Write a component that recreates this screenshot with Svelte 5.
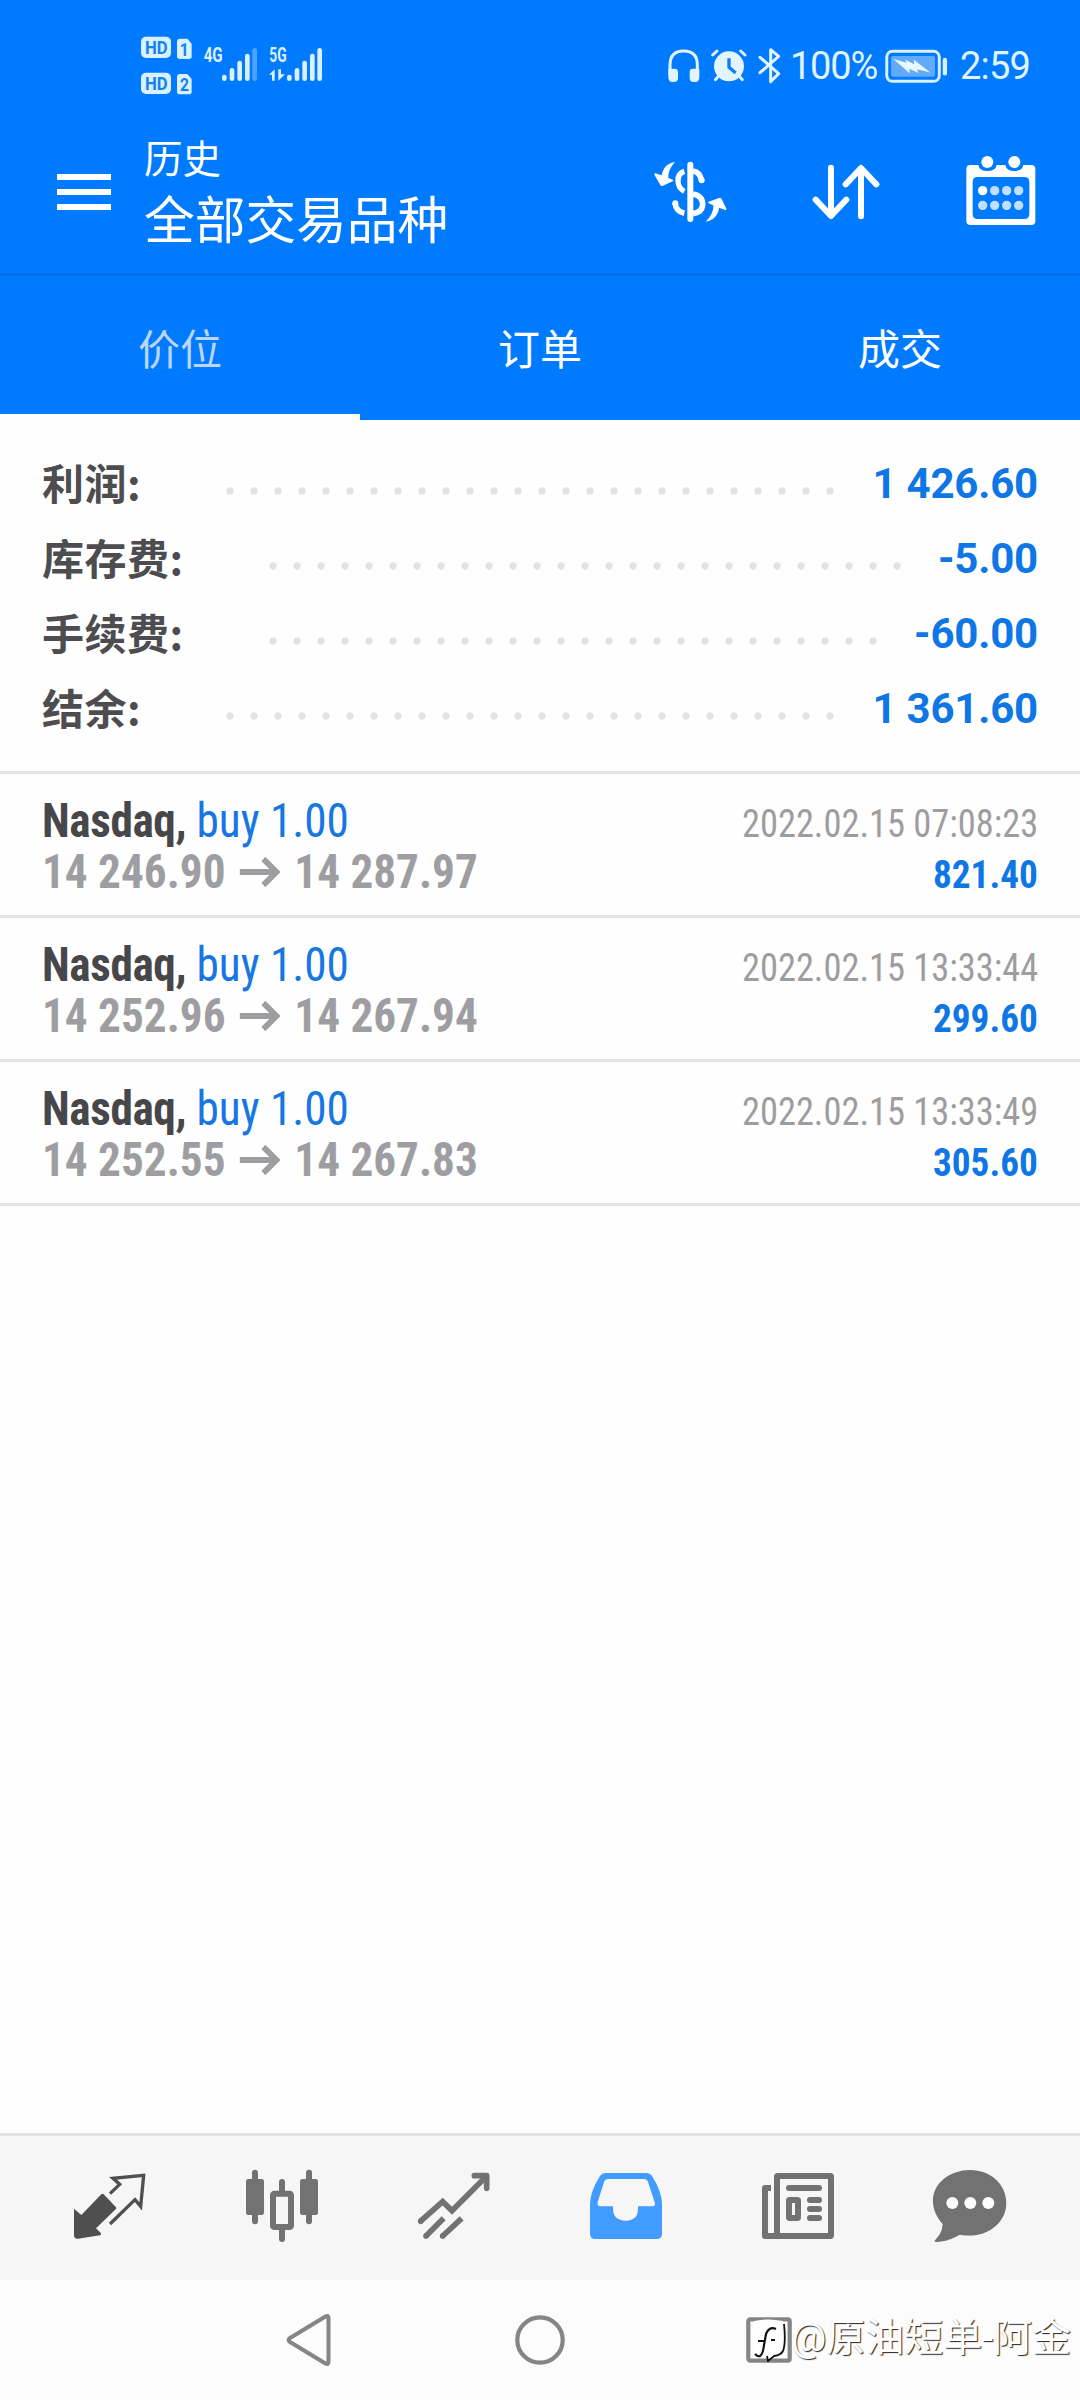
<script lang="ts">
	type Deal = { symbol: string; side: string; open: string; close: string; time: string; profit: string };

	const tabs = ['价位', '订单', '成交'];
	let activeTab = $state(0);

	// dots: number of leader dots between label and value
	const summary = [
		{ label: '利润:', value: '1 426.60', dots: 26 },
		{ label: '库存费:', value: '-5.00', dots: 27 },
		{ label: '手续费:', value: '-60.00', dots: 26 },
		{ label: '结余:', value: '1 361.60', dots: 26 }
	];

	const deals: Deal[] = [
		{ symbol: 'Nasdaq', side: 'buy 1.00', open: '14 246.90', close: '14 287.97', time: '2022.02.15 07:08:23', profit: '821.40' },
		{ symbol: 'Nasdaq', side: 'buy 1.00', open: '14 252.96', close: '14 267.94', time: '2022.02.15 13:33:44', profit: '299.60' },
		{ symbol: 'Nasdaq', side: 'buy 1.00', open: '14 252.55', close: '14 267.83', time: '2022.02.15 13:33:49', profit: '305.60' }
	];
</script>

<div class="screen">
	<header>
		<!-- Status bar -->
		<div class="status">
			<svg class="signals" viewBox="0 0 660 270" aria-hidden="true">
				<g fill="#d9f1ff">
					<rect x="63" y="50" width="90" height="64" rx="15" />
					<rect x="63" y="158" width="90" height="64" rx="15" />
					<path d="M180 56h22l13 15v38q0 8-8 8h-27q-9 0-9-8v-44q0-9 9-9z" />
					<path d="M180 162h22l13 15v38q0 8-8 8h-27q-9 0-9-8v-44q0-9 9-9z" />
				</g>
				<g class="badge-text">
					<text x="75" y="102" textLength="68" lengthAdjust="spacingAndGlyphs">HD</text>
					<text x="75" y="210" textLength="68" lengthAdjust="spacingAndGlyphs">HD</text>
					<text x="179" y="107" textLength="27" lengthAdjust="spacingAndGlyphs">1</text>
					<text x="180" y="213" textLength="27" lengthAdjust="spacingAndGlyphs">2</text>
				</g>
				<g class="net-text">
					<text x="251" y="125" textLength="57" lengthAdjust="spacingAndGlyphs">4G</text>
					<text x="448" y="125" textLength="52" lengthAdjust="spacingAndGlyphs">5G</text>
				</g>
				<g stroke="#d9f1ff" stroke-width="14" stroke-linecap="round" fill="none">
					<path d="M313 171v5M336 151v25M359 129v47M382 108v68" />
					<path d="M404 91v85" opacity=".35" />
					<path d="M508 171v5M531 151v25M554 129v47M577 108v68M599 91v85" />
				</g>
				<path d="M447 164l17-16v34h-8v-18zM475 148h8v15h12l-20 19z" fill="#d9f1ff" />
			</svg>
			<div class="status-right">
				<svg class="st-icons" viewBox="50 48 348 120" aria-hidden="true">
					<path d="M59 135v-30q0-42 41-42t41 42v30" fill="none" stroke="#e2f5ff" stroke-width="9" />
					<path d="M54 116h19q10 0 10 10v18q0 12-12 12h-5q-12 0-12-14zM147 116h-19q-10 0-10 10v18q0 12 12 12h5q12 0 12-14z" fill="#e2f5ff" />
					<circle cx="236" cy="109" r="45" fill="#e2f5ff" />
					<g fill="none" stroke="#e2f5ff" stroke-width="9" stroke-linecap="round">
						<path d="M187 75l13-12M284 75l-13-12M204 139l-9 10M267 139l9 10" />
						<path d="M329 82l56 49-24 24V59l24 20-56 49" stroke-linejoin="round" />
					</g>
					<path d="M236 85v27l20 17" fill="none" stroke="#0a7cf8" stroke-width="10" />
				</svg>
				<span class="percent">100%</span>
				<svg class="battery" viewBox="702 54 196 106" aria-hidden="true">
					<rect x="710" y="61" width="159" height="91" rx="17" fill="none" stroke="#d9f1ff" stroke-width="9" />
					<rect x="723" y="75" width="133" height="63" rx="6" fill="#62abfa" />
					<path d="M730 84l40 12-5-10 28 14-2-14 51 39-41-10 5 12-28-13 2 14z" fill="#e8f8ff" />
					<path d="M886 87v41" stroke="#d9f1ff" stroke-width="13" stroke-linecap="round" />
				</svg>
				<span class="clock">2:59</span>
			</div>
		</div>

		<!-- Toolbar -->
		<div class="toolbar">
			<button class="burger" aria-label="menu"><i></i><i></i><i></i></button>
			<div class="titles">
				<div class="sub">历史</div>
				<h1>全部交易品种</h1>
			</div>
			<div class="actions">
				<svg viewBox="47 21 270 270" aria-hidden="true">
					<g fill="none" stroke="#fff">
						<path d="M180 74v163" stroke-width="18" stroke-linecap="round" />
						<path d="M162 94q-20 6-19 29 1 22 19 31" stroke-width="16" />
						<path d="M188 93q21 3 26 29M134 189q3 25 28 31" stroke-width="17" />
						<path d="M188 162q30 6 29 33-2 22-29 26" stroke-width="17" />
					</g>
					<circle cx="214" cy="121" r="9" fill="#fff" />
					<circle cx="135" cy="190" r="9" fill="#fff" />
					<path d="M134 66q-22 3-33 20-5 9-7 20l-19-6q-4 0-3 4l18 31q3 4 8 2l29-13q4-3 0-5l-13-5q-2-24 20-48z" fill="#fff" />
					<path d="M226 245q24-3 34-22 6-10 6-20l18 7q5 1 4-4l-14-29q-3-5-8-3l-31 11q-4 3 0 5l14 6q2 25-23 49z" fill="#fff" />
				</svg>
				<svg viewBox="513 21 270 270" aria-hidden="true">
					<path d="M603 83v144M557 179l46 49 46-49M693 229V85M647 133l46-49 46 49" fill="none" stroke="#fff" stroke-width="18" stroke-linecap="round" stroke-linejoin="round" />
				</svg>
				<svg viewBox="977 21 270 270" aria-hidden="true">
					<path d="M1020 75h24q3 18 27 18 25 0 28-18h26q3 18 27 18 25 0 27-18h24q12 0 12 12v156q0 12-12 12h-183q-12 0-12-12V87q0-12 12-12zm22 36q-15 0-15 15v96q0 15 15 15h140q15 0 15-15v-96q0-15-15-15z" fill="#fff" fill-rule="evenodd" />
					<circle cx="1071" cy="66" r="18" fill="#fff" />
					<circle cx="1152" cy="66" r="18" fill="#fff" />
					<circle cx="1057" cy="152" r="14" fill="#fff" />
					{#each [1093, 1129, 1165] as cx}
						<circle {cx} cy="152" r="14" fill="#c0e0ff" />
					{/each}
					{#each [1057, 1093, 1129, 1165] as cx}
						<circle {cx} cy="196" r="14" fill="#c0e0ff" />
					{/each}
				</svg>
			</div>
		</div>

		<nav class="tabs">
			{#each tabs as tab, i}
				<button class="tab" class:active={activeTab === i} onclick={() => (activeTab = i)}>{tab}</button>
			{/each}
		</nav>
	</header>

	<main>
		<section class="summary">
			{#each summary as row}
				<div class="sum-row">
					<span class="sum-label">{row.label}</span>
					<span class="dots" style="width: {row.dots * 24}px"></span>
					<span class="sum-value">{row.value}</span>
				</div>
			{/each}
		</section>

		{#each deals as deal}
			<article class="deal">
				<div class="line">
					<span class="name"><b>{deal.symbol},</b> <span class="side">{deal.side}</span></span>
					<span class="time">{deal.time}</span>
				</div>
				<div class="line">
					<span class="prices">{deal.open}<svg class="arrow" viewBox="0 0 42 32" aria-hidden="true"><path d="M0 16h37M25 3l14 13-14 13" fill="none" stroke="#9e9ea2" stroke-width="6" /></svg>{deal.close}</span>
					<span class="profit">{deal.profit}</span>
				</div>
			</article>
		{/each}
	</main>

	<!-- Bottom navigation -->
	<nav class="bottom">
		<svg viewBox="75 129 270 270" aria-hidden="true">
			<path d="M102 266l22 19 60-62q3-3 7 0l37 39q2 3-1 6l-59 57 15 15q2 5-3 6l-66 10q-12 1-12-10z" fill="#4f4f4f" />
			<path d="M210 221l29-28-20-18 92-9-9 93-17-20-75 73" fill="none" stroke="#4f4f4f" stroke-width="10" />
		</svg>
		<svg viewBox="591 129 270 270" aria-hidden="true">
			<path d="M645 158v146M807 158v146M726 186v36M726 320v37" stroke="#727272" stroke-width="18" stroke-linecap="round" />
			<rect x="618" y="177" width="54" height="108" rx="7" fill="#727272" />
			<rect x="780" y="177" width="54" height="108" rx="7" fill="#727272" />
			<rect x="699" y="221" width="54" height="100" rx="4" fill="#f6f6f6" stroke="#727272" stroke-width="18" />
		</svg>
		<svg viewBox="1108 129 270 270" aria-hidden="true">
			<g fill="none" stroke="#727272" stroke-width="17">
				<path d="M1142 304l67-59 28 27 104-104" />
				<path d="M1159 348l53-53M1209 348l57-53" />
				<path d="M1304 167h37v38" stroke-linecap="round" stroke-linejoin="round" />
			</g>
			<circle cx="1143" cy="304" r="8.500" fill="#727272" />
			<circle cx="1159" cy="348" r="8.500" fill="#727272" />
			<circle cx="1209" cy="348" r="8.500" fill="#727272" />
		</svg>
		<svg viewBox="123 129 270 270" aria-hidden="true">
			<path d="M198 159h120q12 0 18 9 30 47 30 85v88q0 16-16 16H166q-16 0-16-16v-88q0-38 30-85 6-9 18-9zm6 18q-8 0-11 7l-20 62q-2 13 8 13h38v6q0 37 38 37t37-37v-6h44q9 0 6-13l-20-60q-3-9-12-9z" fill="#429bff" fill-rule="evenodd" />
		</svg>
		<svg viewBox="639 129 270 270" aria-hidden="true">
			<g fill="none" stroke="#727272" stroke-width="18">
				<rect x="711" y="168" width="162" height="180" rx="2" />
				<path d="M693 204h-18v144h40" stroke-linejoin="round" />
				<path d="M747 204h90M810 240h27M810 267h27M810 294h27" stroke-linecap="round" />
				<rect x="747" y="240" width="27" height="54" rx="2" />
			</g>
		</svg>
		<svg viewBox="1154 129 270 270" aria-hidden="true">
			<path d="M1290 150c60 0 108 42 108 99 0 64-65 110-140 95-20 12-44 21-70 22q-8 0-4-5c17-19 21-29 23-49-68-78-8-162 83-162z" fill="#727272" />
			<circle cx="1236" cy="249" r="18" fill="#fcfcfc" />
			<circle cx="1290" cy="249" r="18" fill="#fcfcfc" />
			<circle cx="1344" cy="249" r="18" fill="#fcfcfc" />
		</svg>
	</nav>

	<!-- System navigation -->
	<div class="system">
		<svg viewBox="0 0 60 60" aria-hidden="true"><path d="M48.500 8v44q0 3-3 1.500L10 32q-3-2 0-4L45.500 6.500q3-1.500 3 1.500z" fill="none" stroke="#858585" stroke-width="4" stroke-linejoin="round" /></svg>
		<svg viewBox="0 0 60 60" aria-hidden="true"><circle cx="30" cy="30" r="22.700" fill="none" stroke="#858585" stroke-width="4.200" /></svg>
		<svg viewBox="0 0 60 60" aria-hidden="true"><rect x="8.300" y="9.300" width="41.400" height="41.400" rx="2" fill="none" stroke="#858585" stroke-width="4.200" /></svg>
		<div class="mark">
			<svg viewBox="0 0 44 48" aria-hidden="true">
				<path d="M7 7q14-3 29 0 3 13 1 29-2 6-10 6l-6 5-2-4H8Q3 24 7 7z" fill="#fff" />
				<path d="M37 10q2 19-1 27-2 4-9 5l-6 5-1-5" fill="none" stroke="#111" stroke-width="1.800" />
				<path d="M29 15q-7-3-10 5l-2 11q-1 9-4 11-2 1-5-2M11 27h7M24 26h4" fill="none" stroke="#111" stroke-width="2.200" />
			</svg>
			<span>@原油短单-阿金</span>
		</div>
	</div>
</div>

<style>
	:global(body) {
		margin: 0;
		background: #fff;
	}

	.screen {
		width: 1080px;
		height: 2400px;
		display: flex;
		flex-direction: column;
		position: relative;
		overflow: hidden;
		background: #fefefe;
		font-family: Roboto, 'Noto Sans CJK SC', sans-serif;
	}

	button {
		border: 0;
		padding: 0;
		background: none;
		font: inherit;
	}

	header {
		background: #007aff;
		color: #fff;
	}

	/* Status bar */
	.status {
		height: 120px;
		display: flex;
		justify-content: space-between;
		box-sizing: border-box;
		padding: 20px 50px 0 120px;
	}

	.signals {
		width: 220px;
		height: 90px;
	}

	.badge-text {
		font: 700 56px Roboto, sans-serif;
		fill: #1281f2;
	}

	.net-text {
		font: 700 58px Roboto, sans-serif;
		fill: #d9f1ff;
	}

	.status-right {
		height: 92px;
		display: flex;
		align-items: center;
		color: #dff4ff;
		font-size: 38px;
	}

	.st-icons {
		width: 116px;
		height: 40px;
	}

	.percent {
		width: 101px;
		text-align: center;
		letter-spacing: -1.2px;
	}

	.battery {
		width: 65px;
		height: 35px;
	}

	.clock {
		width: 81px;
		text-align: right;
		letter-spacing: -0.8px;
	}

	/* Toolbar */
	.toolbar {
		height: 144px;
		display: flex;
		align-items: center;
		padding: 0 34px 9px 57px;
		border-bottom: 3px solid #0070ea;
	}

	.burger {
		width: 54px;
		display: flex;
		flex-direction: column;
		gap: 9px;
	}

	.burger i {
		height: 6px;
		background: #fff;
	}

	.titles {
		margin-left: 33px;
		flex: 1;
	}

	.sub {
		font-size: 38.5px;
		line-height: 57px;
	}

	h1 {
		margin: 2px 0 0;
		font-size: 50.7px;
		font-weight: 400;
		line-height: 64px;
	}

	.actions {
		display: flex;
		gap: 65px;
	}

	.actions svg {
		width: 90px;
		height: 90px;
	}

	/* Tabs */
	.tabs {
		height: 144px;
		display: grid;
		grid-template-columns: repeat(3, 1fr);
	}

	.tab {
		border-bottom: 6px solid transparent;
		padding-top: 2px;
		color: #fff;
		font-size: 42px;
	}

	.tab.active {
		color: #b9d6f8;
		border-bottom-color: #fefefe;
	}

	main {
		flex: 1;
	}

	/* Summary */
	.summary {
		padding: 26px 42px 25px;
		border-bottom: 3px solid #e4e4e5;
	}

	.sum-row {
		height: 75px;
		display: flex;
		align-items: center;
		font-size: 42px;
		font-weight: 700;
	}

	.sum-label {
		margin-right: 77px;
		padding-bottom: 5px;
		color: #4d4d50;
		font-family: 'Noto Sans CJK SC', sans-serif;
		letter-spacing: 0.5px;
	}

	.dots {
		height: 8px;
		margin-top: 15px;
		background: radial-gradient(circle, #e2e2e2 3.2px, transparent 4.2px) 0 0 / 24px 8px;
	}

	.sum-value {
		margin-left: auto;
		color: #0f76e6;
		letter-spacing: -0.2px;
	}

	/* Deals */
	.deal {
		height: 144px;
		box-sizing: border-box;
		padding: 21px 42px 0;
		border-bottom: 3px solid #e4e4e5;
		font-family: 'Roboto Condensed', Roboto, sans-serif;
		font-stretch: 75%;
	}

	.line {
		height: 51px;
		display: flex;
		justify-content: space-between;
		align-items: baseline;
		line-height: 51px;
		white-space: nowrap;
	}

	/* narrower than the condensed cut */
	.name,
	.prices {
		transform: scaleX(0.942);
		transform-origin: left;
		font-size: 48px;
	}

	.time,
	.profit {
		transform-origin: right;
		font-size: 39px;
	}

	.name {
		color: #47474a;
	}

	.name b {
		letter-spacing: -0.4px;
	}

	.side {
		color: #1676e2;
	}

	.time {
		transform: scaleX(0.934);
		color: #9d9da0;
	}

	.prices {
		font-weight: 700;
		color: #9e9ea2;
	}

	.arrow {
		width: 44px;
		height: 32px;
		margin: 0 15px 0 14px;
	}

	.profit {
		transform: scaleX(0.955);
		font-weight: 700;
		color: #0f76e6;
	}

	/* Bottom navigation */
	.bottom {
		height: 144px;
		display: grid;
		grid-template-columns: repeat(6, 1fr);
		place-items: center;
		padding: 0 24px;
		border-top: 3px solid #e2e2e2;
		background: #f6f6f6;
	}

	.bottom svg {
		width: 90px;
		height: 90px;
	}

	/* System navigation */
	.system {
		height: 120px;
		display: flex;
		align-items: center;
		justify-content: center;
		gap: 170px;
		background: #fcfcfc;
	}

	.system > svg {
		width: 60px;
		height: 60px;
	}

	.mark {
		position: absolute;
		right: 9px;
		bottom: 37px;
		display: flex;
		align-items: center;
		color: #fff;
		font-size: 39px;
		line-height: 50px;
		text-shadow: 1px 1px 1px #222;
		white-space: nowrap;
	}

	.mark svg {
		width: 44px;
		height: 48px;
	}
</style>
